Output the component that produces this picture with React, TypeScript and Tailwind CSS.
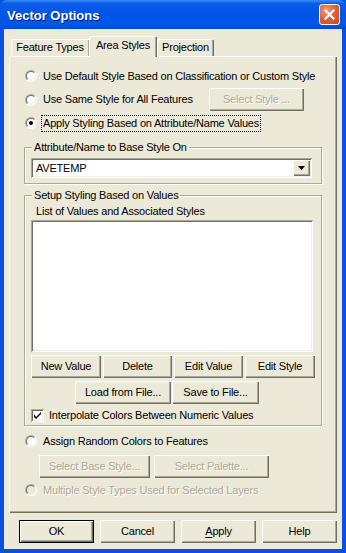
import type { ReactNode } from "react";

const BTN =
  "shadow-[inset_1px_1px_0_#ffffff,inset_-1px_-1px_0_#716F64,inset_-2px_-2px_0_#ACA899]";
const SUNKEN =
  "shadow-[inset_1px_1px_0_#ACA899,inset_-1px_-1px_0_#ffffff,inset_2px_2px_0_#716F64,inset_-2px_-2px_0_#F1EFE2]";
const DISABLED = "text-[#ACA899] [text-shadow:1px_1px_0_#ffffff]";

function Btn({
  label,
  w,
  disabled,
  isDefault,
}: {
  label: ReactNode;
  w: number;
  disabled?: boolean;
  isDefault?: boolean;
}) {
  if (isDefault) {
    return (
      <div className="flex h-[23px] shrink-0 border border-black" style={{ width: w }}>
        <div className={`flex flex-1 items-center justify-center ${BTN}`}>{label}</div>
      </div>
    );
  }
  return (
    <div
      className={`flex h-[23px] shrink-0 items-center justify-center ${BTN} ${disabled ? DISABLED : ""}`}
      style={{ width: w }}
    >
      {label}
    </div>
  );
}

function Radio({ checked, disabled }: { checked?: boolean; disabled?: boolean }) {
  return (
    <span className="flex size-3 shrink-0 rounded-full border border-t-[#ACA899] border-r-white border-b-white border-l-[#ACA899]">
      <span
        className={`flex size-full items-center justify-center rounded-full border border-t-[#716F64] border-r-[#F1EFE2] border-b-[#F1EFE2] border-l-[#716F64] ${disabled ? "bg-[#ECE9D8]" : "bg-white"}`}
      >
        {checked && <span className="size-[4px] rounded-full bg-black" />}
      </span>
    </span>
  );
}

function Group({ title, h, children }: { title: string; h: number; children: ReactNode }) {
  return (
    <div
      className="w-[298px] border border-[#ACA899] shadow-[inset_1px_1px_0_#ffffff,1px_1px_0_#ffffff]"
      style={{ height: h }}
    >
      <div className="-mt-[7px] ml-[7px] w-fit bg-[#ECE9D8] px-[2px] leading-[13px]">{title}</div>
      {children}
    </div>
  );
}

export default function App() {
  return (
    <div className="flex h-[553px] w-[346px] flex-col bg-[#0A4FE0] font-['Liberation_Sans',Arial,sans-serif] text-[11px] leading-[13px] whitespace-nowrap text-black">
      {/* title bar */}
      <div className="flex h-[29px] shrink-0 items-center rounded-t-[7px] bg-[linear-gradient(to_bottom,#3D8DF8_0%,#0A5DEA_12%,#0055E5_50%,#0058EC_85%,#0048D6_100%)] pr-[6px] pl-[7px]">
        <span className="flex-1 pt-[1px] text-[13px] font-bold text-white [text-shadow:1px_1px_0_#0A1883]">
          Vector Options
        </span>
        <div className="flex size-[21px] items-center justify-center rounded-[3px] border border-white bg-[radial-gradient(circle_at_35%_30%,#F19A80_0%,#E0643F_45%,#C8431F_100%)]">
          <svg width="11" height="11" viewBox="0 0 11 11">
            <path d="M1.5 1.5 L9.5 9.5 M9.5 1.5 L1.5 9.5" stroke="#ffffff" strokeWidth="2.2" strokeLinecap="square" />
          </svg>
        </div>
      </div>

      {/* body */}
      <div className="mx-[4px] flex h-[520px] shrink-0 flex-col bg-[#ECE9D8] tracking-[-0.2px]">
        {/* tabs */}
        <div className="mt-[7px] flex h-[20px] items-end pl-[7px]">
          <div className="flex h-[17px] w-[78px] items-center justify-center rounded-tl-[2px] shadow-[inset_1px_1px_0_#ffffff,inset_-1px_0_0_#ACA899]">
            Feature Types
          </div>
          <div className="relative z-10 -mb-[1px] flex h-[21px] w-[68px] items-start justify-center rounded-t-[2px] bg-[#ECE9D8] pt-[3px] shadow-[inset_1px_1px_0_#ffffff,inset_-1px_0_0_#716F64,inset_-2px_0_0_#ACA899]">
            Area Styles
          </div>
          <div className="flex h-[17px] w-[57px] items-center justify-center rounded-t-[2px] shadow-[inset_1px_1px_0_#ffffff,inset_-1px_0_0_#716F64,inset_-2px_0_0_#ACA899]">
            Projection
          </div>
        </div>

        {/* tab panel */}
        <div className={`ml-[5px] flex h-[457px] w-[328px] flex-col px-[15px] pt-[12px] ${BTN}`}>
          <div className="flex h-[16px] items-center gap-[6px] pl-[1px]">
            <Radio />
            <span>Use Default Style Based on Classification or Custom Style</span>
          </div>
          <div className="mt-[4px] flex h-[23px] items-center pl-[1px]">
            <Radio />
            <span className="ml-[6px] flex-1">Use Same Style for All Features</span>
            <div className="mr-[18px]">
              <Btn label="Select Style ..." w={95} disabled />
            </div>
          </div>
          <div className="mt-[3px] flex h-[18px] items-center pl-[1px]">
            <Radio checked />
            <span className="ml-[4px] border border-dotted border-black px-[1px] leading-[15px]">
              Apply Styling Based on Attribute/Name Values
            </span>
          </div>

          <div className="mt-[15px]">
            <Group title="Attribute/Name to Base Style On" h={37}>
              <div className={`mt-[4px] ml-[6px] flex h-[20px] w-[281px] items-center bg-white pr-[2px] pl-[5px] ${SUNKEN}`}>
                <span className="flex-1">AVETEMP</span>
                <div className={`flex h-[16px] w-[17px] items-center justify-center bg-[#ECE9D8] ${BTN}`}>
                  <svg width="7" height="4" viewBox="0 0 7 4">
                    <path d="M0 0 H7 L3.5 4 Z" fill="#000000" />
                  </svg>
                </div>
              </div>
            </Group>
          </div>

          <div className="mt-[11px]">
            <Group title="Setup Styling Based on Values" h={231}>
              <div className="mt-[3px] ml-[11px]">List of Values and Associated Styles</div>
              <div className={`mt-[2px] ml-[6px] h-[132px] w-[282px] bg-white ${SUNKEN}`} />
              <div className="mt-[3px] ml-[6px] flex gap-[2px]">
                <Btn label="New Value" w={70} />
                <Btn label="Delete" w={69} />
                <Btn label="Edit Value" w={69} />
                <Btn label="Edit Style" w={70} />
              </div>
              <div className="mt-[3px] ml-[50px] flex gap-[1px]">
                <Btn label="Load from File..." w={96} />
                <Btn label="Save to File..." w={87} />
              </div>
              <div className="mt-[5px] ml-[6px] flex h-[13px] items-center gap-[5px]">
                <span className={`flex size-[13px] items-center justify-center bg-white ${SUNKEN}`}>
                  <svg width="7" height="7" viewBox="0 0 7 7">
                    <path d="M0 2 L0 5 L2 7 L7 2 L7 0 L2 5 Z" fill="#000000" />
                  </svg>
                </span>
                <span>Interpolate Colors Between Numeric Values</span>
              </div>
            </Group>
          </div>

          <div className="mt-[7px] flex h-[16px] items-center gap-[6px] pl-[1px]">
            <Radio />
            <span>Assign Random Colors to Features</span>
          </div>
          <div className="mt-[6px] ml-[15px] flex gap-[4px]">
            <Btn label="Select Base Style..." w={111} disabled />
            <Btn label="Select Palette..." w={115} disabled />
          </div>
          <div className="mt-[4px] flex h-[16px] items-center gap-[6px] pl-[1px]">
            <Radio disabled />
            <span className={DISABLED}>Multiple Style Types Used for Selected Layers</span>
          </div>
        </div>

        {/* dialog buttons */}
        <div className="mt-[7px] flex gap-[6px] pl-[15px]">
          <Btn label="OK" w={75} isDefault />
          <Btn label="Cancel" w={75} />
          <Btn
            label={
              <span>
                <span className="underline underline-offset-2">A</span>pply
              </span>
            }
            w={75}
          />
          <Btn label="Help" w={75} />
        </div>
      </div>
    </div>
  );
}
